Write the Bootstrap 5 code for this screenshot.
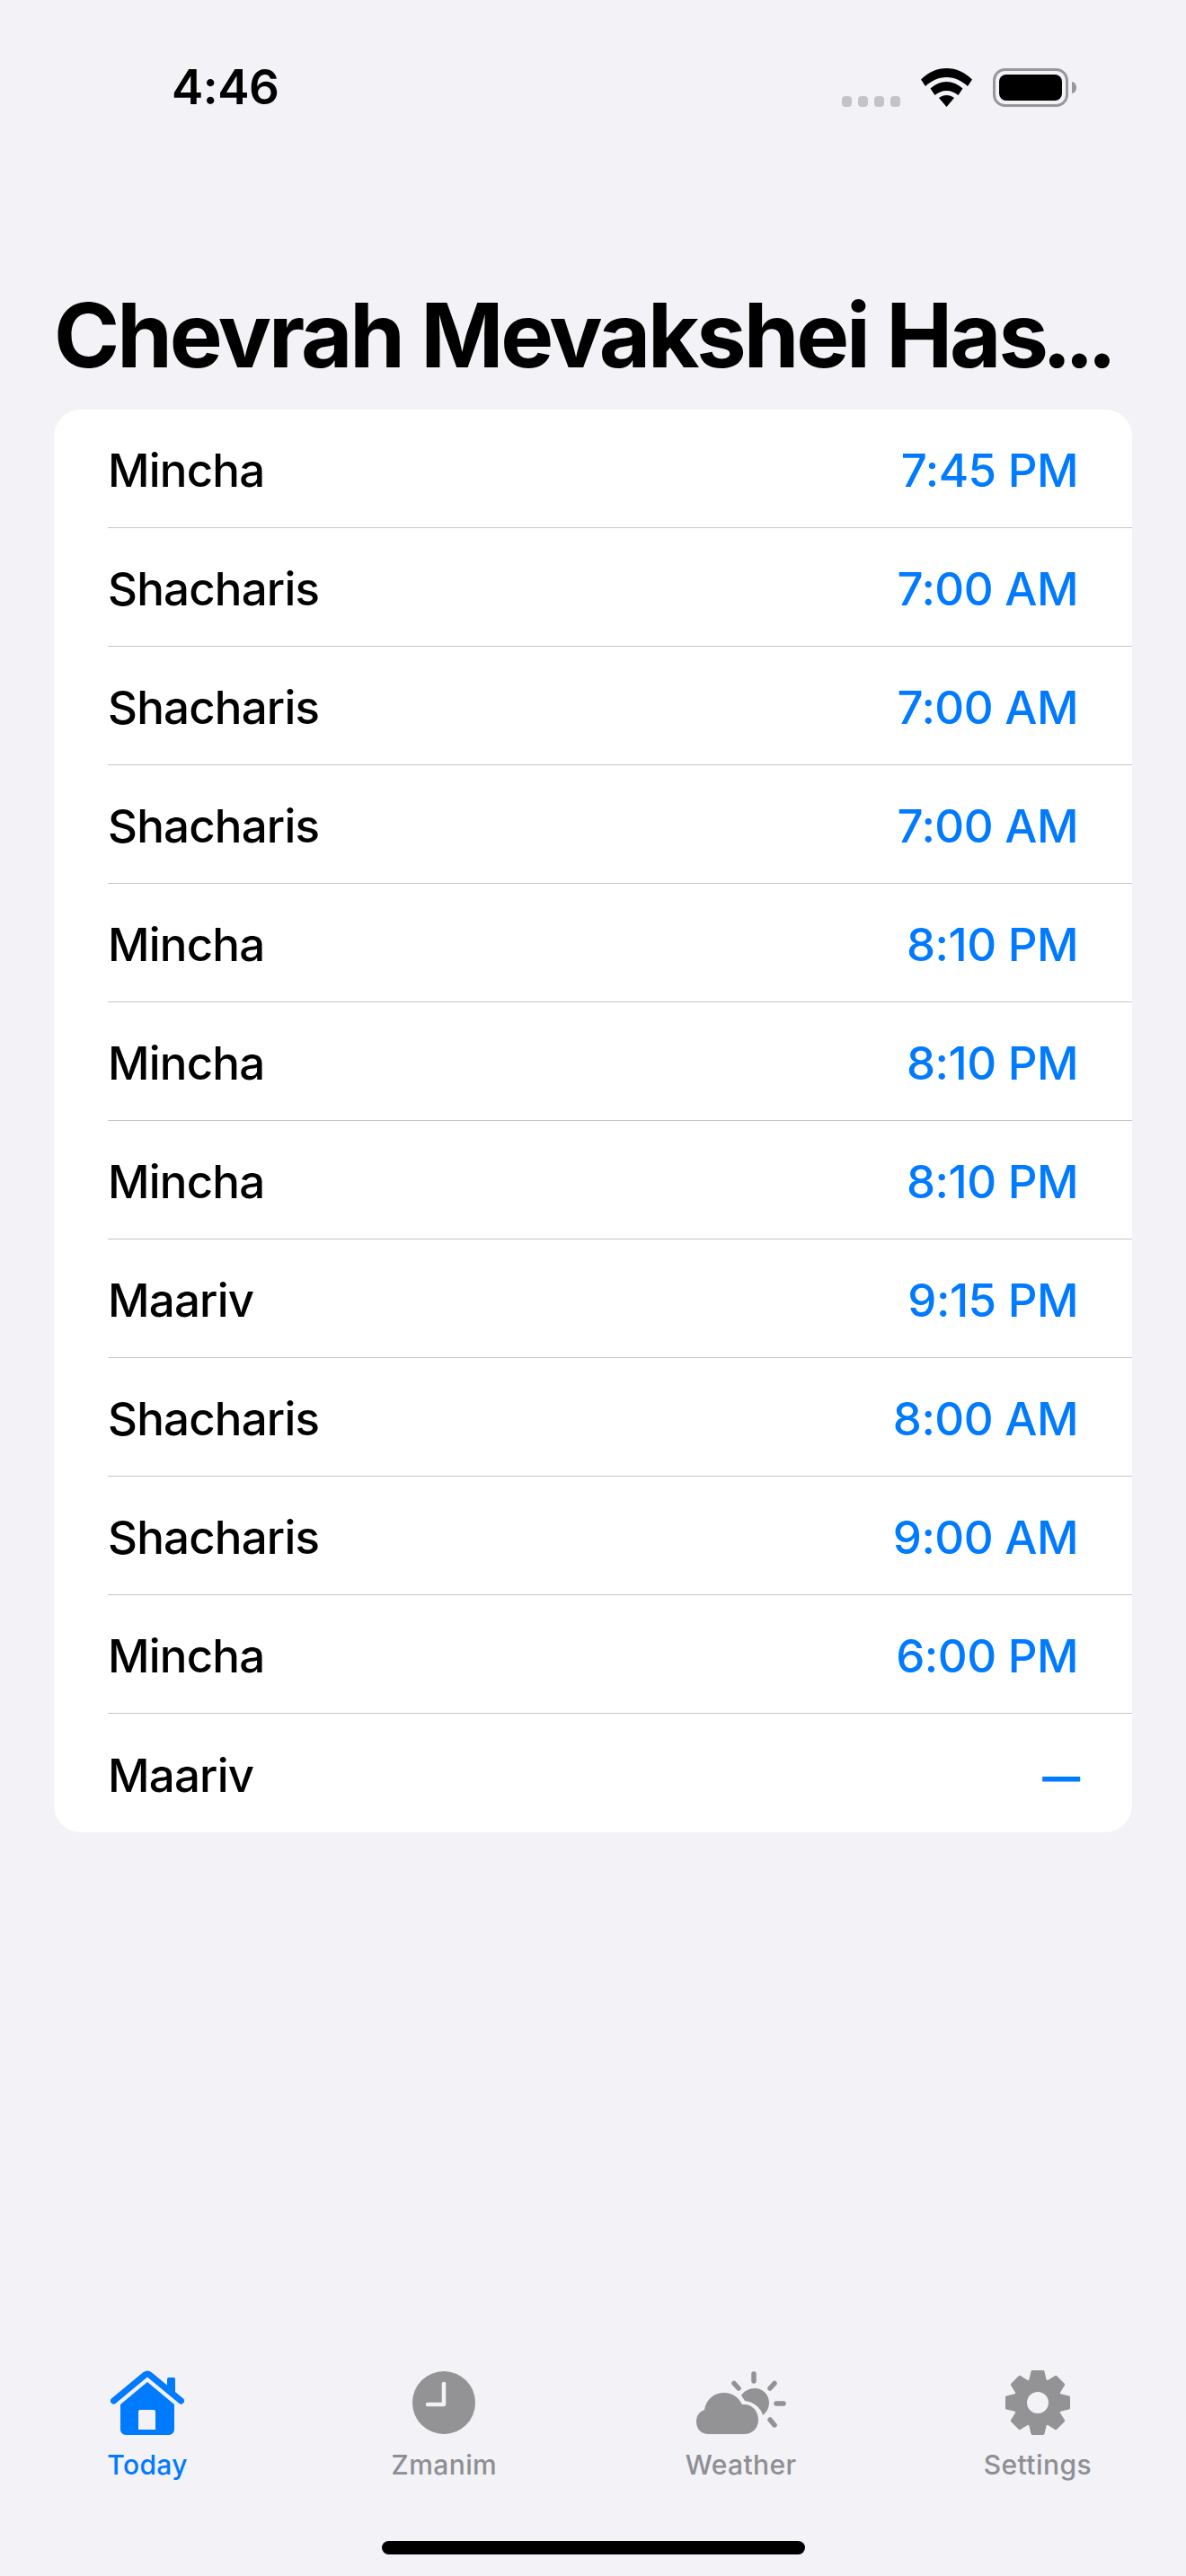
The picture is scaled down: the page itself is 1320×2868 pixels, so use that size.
<!DOCTYPE html>
<html lang="en">
<head>
  <meta charset="UTF-8" />
  <meta name="viewport" content="width=device-width, initial-scale=1.0" />
  <title>Today</title>
  <link href="https://cdn.jsdelivr.net/npm/bootstrap@5.3.2/dist/css/bootstrap.min.css" rel="stylesheet">
  <style>
    body {
      background: #f2f2f7;
      font-family: Inter, "Liberation Sans", sans-serif;
      color: #000;
      width: 1320px;
      height: 2868px;
      overflow: hidden;
    }
    .status-row { height: 71px; margin-top: 62px; padding: 0 122px 0 191px; }
    .status-time { font-size: 53px; font-weight: 600; line-height: 71px; letter-spacing: -.5px; }
    .status-icons { gap: 23px; }
    .screen-title {
      font-size: 99px;
      font-weight: 700;
      line-height: 120px;
      letter-spacing: -3.1px;
      margin: 180px 60px 23px 60px;
      white-space: nowrap;
    }
    .title-dots { letter-spacing: -8px; margin-left: -4px; }
    .times-card { margin: 0 60px; border-radius: 30px; border: 0; background: #fff; overflow: hidden; }
    .time-row { padding: 0 0 0 60px; border: 0; background: transparent; color: #000; }
    .time-inner {
      height: 132px;
      padding-right: 60px;
      padding-top: 6px;
      border-bottom: 1.5px solid #c6c6c8;
      font-size: 51px;
      font-weight: 550;
    }
    .time-row:last-child .time-inner { border-bottom: 0; }
    .time-name { letter-spacing: -.8px; }
    .time-val { color: #007aff; letter-spacing: -.5px; }
    .time-dash { font-size: 42px; font-weight: 800; margin-right: -2px; letter-spacing: 0; }
    .tab-strip { margin-top: auto; margin-left: -1px; }
    .tab-cell { width: 25%; color: #8e8e93; }
    .tab-cell.on { color: #007aff; }
    .tab-icon { height: 76px; }
    .tab-label { font-size: 30px; font-weight: 500; line-height: 36px; margin-top: 13px; letter-spacing: .4px; }
    .home-bar { width: 471px; height: 15px; border-radius: 8px; background: #000; margin: 67px auto 24px; }
  </style>
</head>
<body class="d-flex flex-column">

  <div class="status-row d-flex justify-content-between align-items-center">
    <div class="status-time">4:46</div>
    <div class="status-icons d-flex align-items-center">
      <svg width="65" height="43" viewBox="0 0 65 43" fill="#c4c4c8">
        <rect x="0" y="31" width="11" height="12" rx="4"/>
        <rect x="18" y="31" width="11" height="12" rx="4"/>
        <rect x="36" y="31" width="11" height="12" rx="4"/>
        <rect x="54" y="31" width="11" height="12" rx="4"/>
      </svg>
      <svg width="57" height="43" viewBox="0 0 57 43" fill="#000">
        <path d="M28.5 0C39 0 49 4.500 57 12.500L52 20C45.500 14 37.500 10 28.500 10S11.500 14 5 20L0 12.500C8 4.500 18 0 28.500 0Z"/>
        <path d="M28.500 15C35 15 41.500 18 46.500 22.500L41.500 30C38 27 33.500 25 28.500 25S19 27 15.500 30L10.500 22.500C15.500 18 22 15 28.500 15Z"/>
        <path d="M28.500 30C31.500 30 34.500 31 37 33L28.500 43L20 33C22.500 31 25.500 30 28.500 30Z"/>
      </svg>
      <svg width="93" height="43" viewBox="0 0 93 43">
        <rect x="1.500" y="1.500" width="81" height="40" rx="12" fill="none" stroke="#98989c" stroke-width="3"/>
        <rect x="7" y="7" width="70" height="29" rx="8" fill="#000"/>
        <path d="M88 15c3 .5 5 3 5 6.500s-2 6-5 6.500z" fill="#98989c"/>
      </svg>
    </div>
  </div>

  <h1 class="screen-title">Chevrah Mevakshei Has<span class="title-dots">...</span></h1>

  <div id="times" class="list-group times-card"></div>

  <div class="tab-strip d-flex">
    <div class="tab-cell on d-flex flex-column align-items-center">
      <div class="tab-icon d-flex align-items-center">
        <svg width="82" height="73" viewBox="0 0 82 73">
          <path d="M41 13L71 38V66a6 6 0 0 1-6 6H17a6 6 0 0 1-6-6V38ZM33 44a2 2 0 0 0-2 2V66H50V46a2 2 0 0 0-2-2Z" fill="#007aff" fill-rule="evenodd"/>
          <path d="M63 24V10a2 2 0 0 1 2-2h5a2 2 0 0 1 2 2V30Z" fill="#007aff"/>
          <path d="M3.500 34L38.500 5a4 4 0 0 1 5 0L78.500 34" fill="none" stroke="#007aff" stroke-width="7" stroke-linecap="round" stroke-linejoin="round"/>
        </svg>
      </div>
      <div class="tab-label">Today</div>
    </div>
    <div class="tab-cell d-flex flex-column align-items-center">
      <div class="tab-icon d-flex align-items-center">
        <svg width="70" height="70" viewBox="0 0 70 70">
          <circle cx="35" cy="35" r="35" fill="#939396"/>
          <path d="M35 14V37H17" fill="none" stroke="#f2f2f7" stroke-width="4.500" stroke-linecap="round" stroke-linejoin="round"/>
        </svg>
      </div>
      <div class="tab-label">Zmanim</div>
    </div>
    <div class="tab-cell d-flex flex-column align-items-center">
      <div class="tab-icon d-flex align-items-center">
        <svg width="100" height="71" viewBox="0 0 100 71" fill="#939396">
          <path d="M14 70C5 70 0 64 0 56C0 50 3 45 9 43C11 31 20 24 31 24C40 24 47 29 51 37C62 36 69 44 69 54C69 63 63 70 53 70Z"/>
          <path d="M50 27C53 22 59 19 65 19C74 19 81 26 81 35C81 41 78 46 74 49C72 41 64 34 54 33Z"/>
          <path d="M64 3V11M42 13.500L47 19M87 13.500L82 19M89 36H97M82 54L87 60" fill="none" stroke="#939396" stroke-width="5.500" stroke-linecap="round"/>
        </svg>
      </div>
      <div class="tab-label">Weather</div>
    </div>
    <div class="tab-cell d-flex flex-column align-items-center">
      <div class="tab-icon d-flex align-items-center">
        <svg width="72" height="72" viewBox="-36 -36 72 72" fill="#939396" id="gear">
          <circle r="27"/>
          <circle r="12" fill="#f2f2f7"/>
        </svg>
      </div>
      <div class="tab-label">Settings</div>
    </div>
  </div>

  <div class="home-bar"></div>

  <script>
    const righe = [
      ["Mincha", "7:45 PM"], ["Shacharis", "7:00 AM"], ["Shacharis", "7:00 AM"],
      ["Shacharis", "7:00 AM"], ["Mincha", "8:10 PM"], ["Mincha", "8:10 PM"],
      ["Mincha", "8:10 PM"], ["Maariv", "9:15 PM"], ["Shacharis", "8:00 AM"],
      ["Shacharis", "9:00 AM"], ["Mincha", "6:00 PM"], ["Maariv", "—"]
    ];
    const lista = document.getElementById("times");
    righe.forEach(r => {
      const el = document.createElement("div");
      el.className = "list-group-item time-row";
      const dash = r[1] === "—" ? " time-dash" : "";
      el.innerHTML = `<div class="time-inner d-flex justify-content-between align-items-center">
        <span class="time-name">${r[0]}</span><span class="time-val${dash}">${r[1]}</span></div>`;
      lista.appendChild(el);
    });

    // teeth of the settings gear
    const gear = document.getElementById("gear");
    let denti = "";
    for (let i = 0; i < 8; i++) {
      denti += `<path transform="rotate(${i * 45})" d="M-6 -34.500H6L9 -22H-9Z" stroke="#939396" stroke-width="3" stroke-linejoin="round"/>`;
    }
    gear.insertAdjacentHTML("afterbegin", denti);
  </script>
  <script src="https://cdn.jsdelivr.net/npm/bootstrap@5.3.2/dist/js/bootstrap.bundle.min.js"></script>
</body>
</html>
